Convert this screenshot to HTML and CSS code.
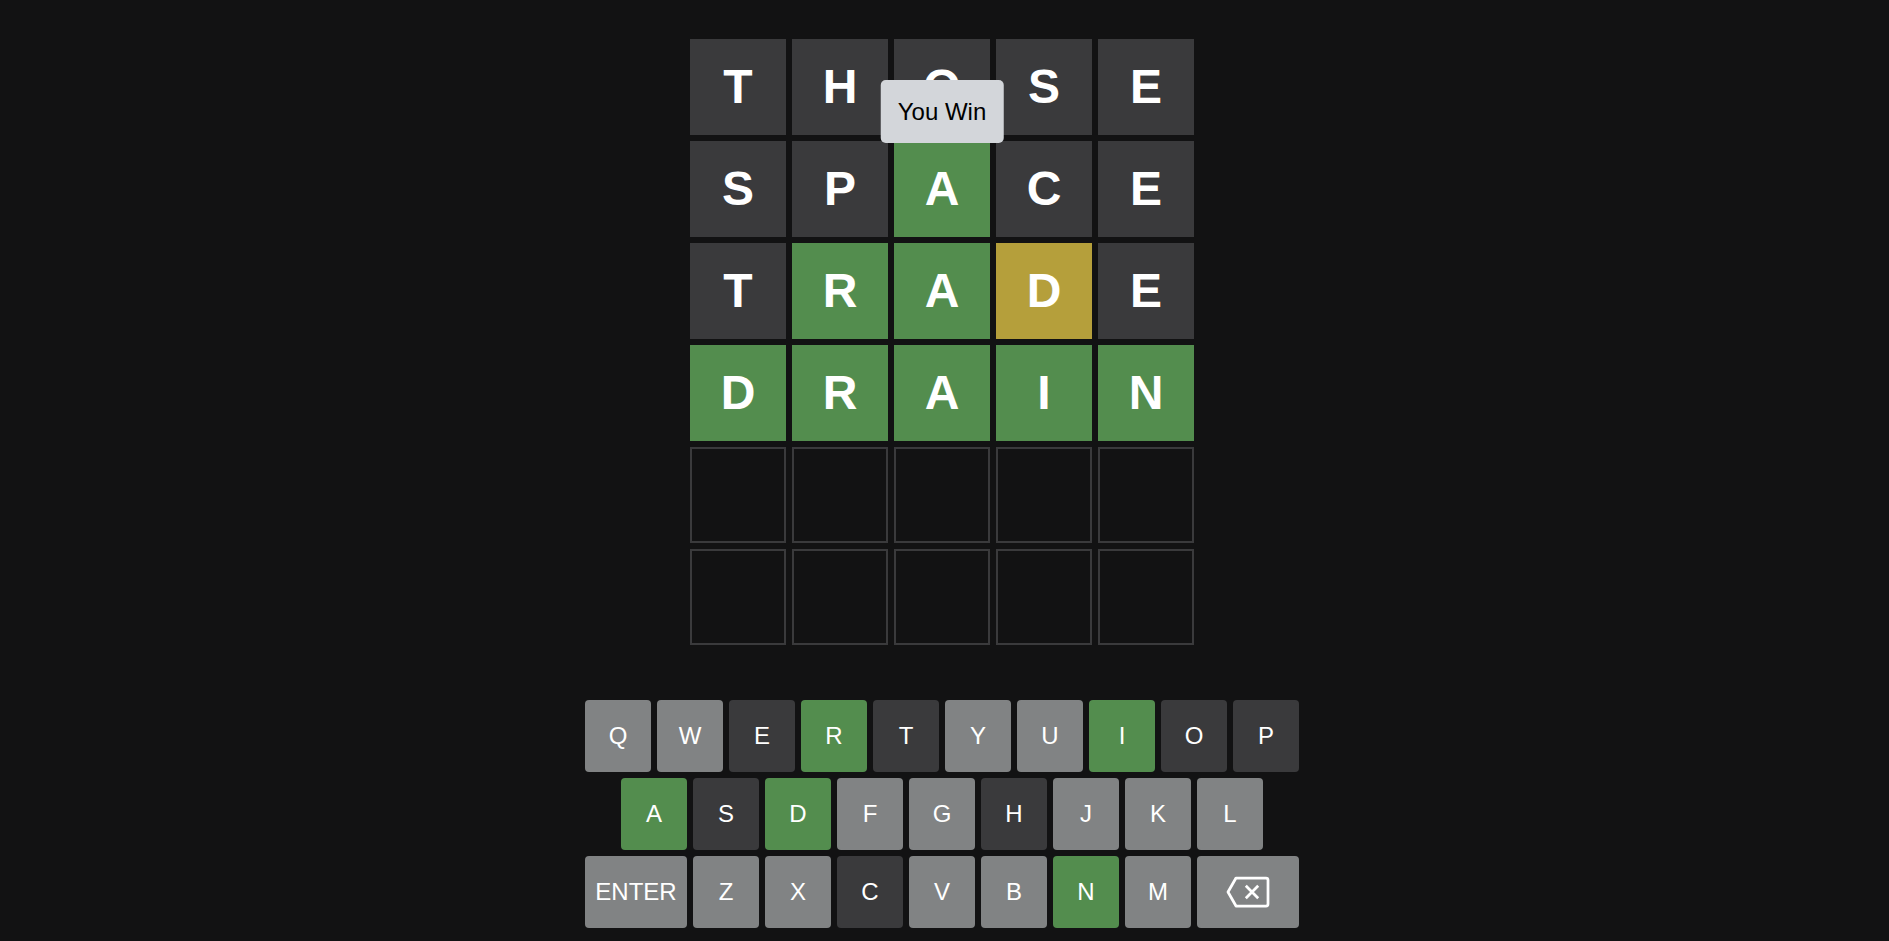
FILE: index.html
```html
<!DOCTYPE html>
<html lang="en">
<head>
<meta charset="utf-8">
<title>Wordle</title>
<link rel="stylesheet" href="styles.css">
</head>
<body>
<div class="app">
  <div class="board-wrap">
    <div class="board">
      <div class="row">
        <div class="tile absent">T</div><div class="tile absent">H</div><div class="tile absent">O</div><div class="tile absent">S</div><div class="tile absent">E</div>
      </div>
      <div class="row">
        <div class="tile absent">S</div><div class="tile absent">P</div><div class="tile correct">A</div><div class="tile absent">C</div><div class="tile absent">E</div>
      </div>
      <div class="row">
        <div class="tile absent">T</div><div class="tile correct">R</div><div class="tile correct">A</div><div class="tile present">D</div><div class="tile absent">E</div>
      </div>
      <div class="row">
        <div class="tile correct">D</div><div class="tile correct">R</div><div class="tile correct">A</div><div class="tile correct">I</div><div class="tile correct">N</div>
      </div>
      <div class="row">
        <div class="tile empty"></div><div class="tile empty"></div><div class="tile empty"></div><div class="tile empty"></div><div class="tile empty"></div>
      </div>
      <div class="row">
        <div class="tile empty"></div><div class="tile empty"></div><div class="tile empty"></div><div class="tile empty"></div><div class="tile empty"></div>
      </div>
    </div>
    <div class="toast">You Win</div>
  </div>

  <div class="keyboard">
    <div class="krow">
      <button class="key">Q</button><button class="key">W</button><button class="key dark">E</button><button class="key green">R</button><button class="key dark">T</button><button class="key">Y</button><button class="key">U</button><button class="key green">I</button><button class="key dark">O</button><button class="key dark">P</button>
    </div>
    <div class="krow">
      <button class="key green">A</button><button class="key dark">S</button><button class="key green">D</button><button class="key">F</button><button class="key">G</button><button class="key dark">H</button><button class="key">J</button><button class="key">K</button><button class="key">L</button>
    </div>
    <div class="krow">
      <button class="key wide">ENTER</button><button class="key">Z</button><button class="key">X</button><button class="key dark">C</button><button class="key">V</button><button class="key">B</button><button class="key green">N</button><button class="key">M</button>
      <button class="key wide" aria-label="backspace">
        <svg class="bksp" width="44" height="32" viewBox="0 0 44 32" fill="none" stroke="#ffffff" stroke-width="2.75" stroke-linejoin="round">
          <path d="M10 2 H40 Q42 2 42 4 V28 Q42 30 40 30 H10 L2 16 Z"/>
          <path d="M19.8 9.8 L32.2 22.2 M32.2 9.8 L19.8 22.2"/>
        </svg>
      </button>
    </div>
  </div>
</div>
</body>
</html>
```

FILE: styles.css
```css
html, body {
  margin: 0;
  padding: 0;
  background: #121213;
  height: 100%;
}

body {
  font-family: "Liberation Sans", Arial, sans-serif;
  color: #ffffff;
}

.app {
  display: flex;
  flex-direction: column;
  align-items: center;
  padding-top: 39px;
  padding-right: 5px;
}

.board-wrap {
  position: relative;
}

.board {
  display: flex;
  flex-direction: column;
  gap: 6px;
}

.row {
  display: flex;
  gap: 6px;
}

.tile {
  width: 96px;
  height: 96px;
  box-sizing: border-box;
  display: flex;
  align-items: center;
  justify-content: center;
  font-size: 48px;
  font-weight: 700;
  color: #ffffff;
  line-height: 1;
}

.tile.absent { background: #3a3a3c; }
.tile.correct { background: #538d4e; }
.tile.present { background: #b59f3b; }
.tile.empty {
  background: transparent;
  border: 2px solid #3a3a3c;
}

.toast {
  position: absolute;
  top: 41px;
  left: 50%;
  transform: translateX(-50%);
  background: #d3d6da;
  color: #000000;
  font-size: 24px;
  line-height: 27px;
  padding: 18px 17px;
  border-radius: 5px;
  white-space: nowrap;
}

.keyboard {
  margin-top: 55px;
  display: flex;
  flex-direction: column;
  align-items: center;
  gap: 6px;
}

.krow {
  display: flex;
  gap: 6px;
}

.key {
  width: 66px;
  height: 72px;
  border: 0;
  border-radius: 4px;
  padding: 0;
  margin: 0;
  background: #818384;
  color: #ffffff;
  font-family: "Liberation Sans", Arial, sans-serif;
  font-size: 24px;
  display: flex;
  align-items: center;
  justify-content: center;
}

.key.dark { background: #3a3a3c; }
.key.green { background: #538d4e; }
.key.wide { width: 102px; }

.bksp {
  display: block;
}
```
